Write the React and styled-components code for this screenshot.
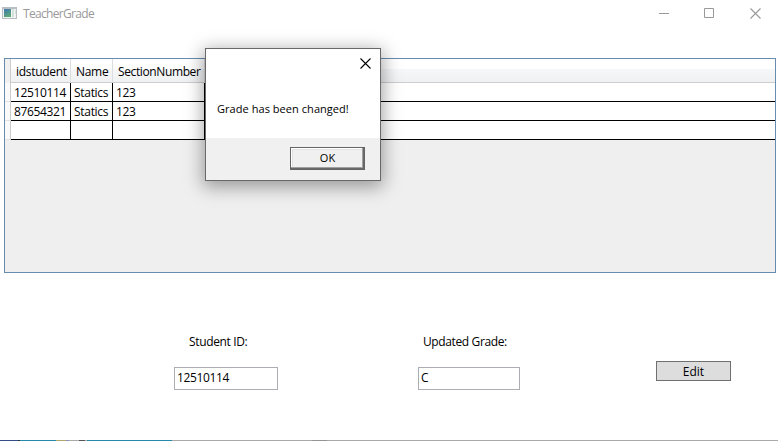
import React from 'react';
import styled, { createGlobalStyle } from 'styled-components';

const GlobalStyle = createGlobalStyle`
  * { box-sizing: border-box; }
  body { margin: 0; background: #fff; overflow: hidden; }
`;

const Window = styled.div`
  position: relative;
  display: flex;
  flex-direction: column;
  width: 778px;
  height: 441px;
  background: #fff;
  color: #000;
  font: 12px/16px 'Open Sans', 'Noto Sans', sans-serif;
  overflow: hidden;
`;

const TitleBar = styled.header`
  display: flex;
  height: 58px;
  padding: 7px 17px 0 2px;
  color: #999;
`;

const Title = styled.span`
  flex: 1;
  margin-left: 5px;
  white-space: nowrap;
  line-height: 14px;
  letter-spacing: -0.68px;
`;

const WindowButtons = styled.div`
  display: flex;
  gap: 35px;
  padding-top: 1px;
`;

const Glyph = styled.svg`
  display: block;
  flex: none;
`;

const DataGrid = styled.section`
  display: flex;
  flex-direction: column;
  width: 772px;
  height: 215px;
  margin-left: 4px;
  border: 1px solid #688caf;
  background: #efefef;
`;

const GridRow = styled.div`
  display: grid;
  grid-template-columns: 6px 60px 42px 92px 1fr;
  height: ${(p) => (p.$head ? 24 : 19)}px;
`;

const RowHeader = styled.div`
  border-right: 1px solid #ccc;
  border-bottom: ${(p) => (p.$head ? 'none' : '1px solid #e2e2e2')};
  background: ${(p) => (p.$head ? '#f0f0f0' : '#fafafa')};
`;

const HeadCell = styled.div`
  padding: 5px 0 0 5px;
  border-right: ${(p) => (p.$last ? 'none' : '1px solid #dcdde0')};
  border-bottom: 1px solid #cdcdcd;
  background: linear-gradient(#fff 0 10px, #f6f7f9 10px, #f0f1f3 23px);
  white-space: nowrap;
  letter-spacing: ${(p) => p.$track || 0}px;
`;

const Cell = styled.div`
  padding: 2px 0 0 3px;
  border-right: ${(p) => (p.$last ? 'none' : '1px solid #000')};
  border-bottom: 1px solid #000;
  background: #fff;
  white-space: nowrap;
  letter-spacing: ${(p) => p.$track || 0}px;
`;

const Form = styled.form`
  display: grid;
  grid-template-columns: 244px 238px 75px;
  margin: 61px 0 0 174px;
`;

const Field = styled.label`
  display: flex;
  flex-direction: column;
  gap: 17px;
`;

const Caption = styled.span`
  padding-left: ${(p) => p.$indent}px;
  white-space: nowrap;
  letter-spacing: ${(p) => p.$track}px;
`;

const TextBox = styled.input`
  width: ${(p) => p.$width}px;
  height: 23px;
  padding: 0 2px 3px;
  border: 1px solid #abadb3;
  border-radius: 0;
  outline: none;
  background: #fff;
  color: #000;
  font: inherit;
  letter-spacing: -0.35px;
`;

const EditButton = styled.button`
  height: 20px;
  margin-top: 27px;
  padding: 2px 0 0;
  border: 1px solid #707070;
  background: #ddd;
  color: #000;
  font: inherit;
`;

const Strip = styled.footer`
  height: 1px;
  margin-top: auto;
  background: linear-gradient(
    90deg,
    #344c87 0 18px, #333 18px 20px, #2489ab 20px 56px, #b3a469 56px 66px,
    #8a8fb5 66px 69px, #a9a9a9 69px 79px, #555 79px 85px, #a9a9a9 85px 87px,
    #2489ab 87px 172px, #a9a9a9 172px 312px, #949494 312px 327px, #a9a9a9 327px
  );
`;

const Dialog = styled.div`
  position: absolute;
  left: 205px;
  top: 48px;
  display: flex;
  flex-direction: column;
  width: 176px;
  height: 133px;
  border: 1px solid #696969;
  background: #fff;
  box-shadow: 0 4px 17px 2px rgba(0, 0, 0, 0.36);
`;

const DialogTop = styled.div`
  display: flex;
  justify-content: flex-end;
  height: 52px;
  padding: 9px 9px 0 0;
`;

const Message = styled.p`
  flex: 1;
  margin: 0;
  padding-left: 11px;
  font-size: 11px;
  letter-spacing: 0.05px;
  white-space: nowrap;
`;

const DialogFooter = styled.div`
  display: flex;
  justify-content: flex-end;
  height: 42px;
  padding: 9px 15px 0 0;
  background: #f0f0f0;
`;

const OkButton = styled.button`
  width: 75px;
  height: 23px;
  padding: 0 0 2px;
  border: 1px solid #646464;
  background: #f0f0f0;
  box-shadow: inset -1px -1px #696969, inset -2px -2px #a0a0a0, inset 1px 1px #fff, inset 2px 2px #e3e3e3;
  color: #000;
  font: 11px/16px 'Open Sans', 'Noto Sans', sans-serif;
`;

const students = [
  ['12510114', 'Statics', '123'],
  ['87654321', 'Statics', '123'],
  ['', '', ''],
];

function AppIcon() {
  return (
    <Glyph width="16" height="13" viewBox="0 0 16 13" shapeRendering="crispEdges">
      <defs>
        <linearGradient id="screen" x1="0" y1="0" x2="0.4" y2="1">
          <stop offset="0" stopColor="#3f78b4" />
          <stop offset="1" stopColor="#5aa778" />
        </linearGradient>
      </defs>
      <path fill="#b9bec2" d="M0 0h15v12H0z" />
      <path fill="#f0f2f3" d="M1 2h13v9H1z" />
      <path fill="url(#screen)" d="M2 2h7v8H2z" />
      <path fill="#d3e3dc" d="M10 2h2v8h-2zM13 3h1v4h-1z" />
    </Glyph>
  );
}

function CloseGlyph({ color }) {
  return (
    <Glyph width="11" height="11" viewBox="0 0 11 11" fill="none" stroke={color}>
      <path d="M.5.5l10 10M10.5.5l-10 10" strokeWidth="1.1" />
    </Glyph>
  );
}

export default function App() {
  return (
    <Window>
      <GlobalStyle />
      <TitleBar>
        <AppIcon />
        <Title>TeacherGrade</Title>
        <WindowButtons>
          <Glyph width="10" height="10" stroke="#999"><path d="M0 5.5h10" /></Glyph>
          <Glyph width="11" height="10" stroke="#999" fill="none"><path d="M.5.5h9v9h-9z" /></Glyph>
          <CloseGlyph color="#999" />
        </WindowButtons>
      </TitleBar>
      <DataGrid>
        <GridRow $head>
          <RowHeader $head />
          <HeadCell $track={-0.3}>idstudent</HeadCell>
          <HeadCell $track={-0.3}>Name</HeadCell>
          <HeadCell $track={-0.38}>SectionNumber</HeadCell>
          <HeadCell $last />
        </GridRow>
        {students.map(([id, name, section], i) => (
          <GridRow key={i}>
            <RowHeader />
            <Cell $track={-0.35}>{id}</Cell>
            <Cell $track={-0.3}>{name}</Cell>
            <Cell $track={-0.35}>{section}</Cell>
            <Cell $last />
          </GridRow>
        ))}
      </DataGrid>
      <Form onSubmit={(e) => e.preventDefault()}>
        <Field>
          <Caption $indent={15} $track={-0.35}>Student ID:</Caption>
          <TextBox $width={104} defaultValue="12510114" />
        </Field>
        <Field>
          <Caption $indent={5} $track={-0.38}>Updated Grade:</Caption>
          <TextBox $width={102} defaultValue="C" />
        </Field>
        <EditButton type="submit">Edit</EditButton>
      </Form>
      <Strip />
      <Dialog role="dialog">
        <DialogTop><CloseGlyph color="#000" /></DialogTop>
        <Message>Grade has been changed!</Message>
        <DialogFooter><OkButton>OK</OkButton></DialogFooter>
      </Dialog>
    </Window>
  );
}
